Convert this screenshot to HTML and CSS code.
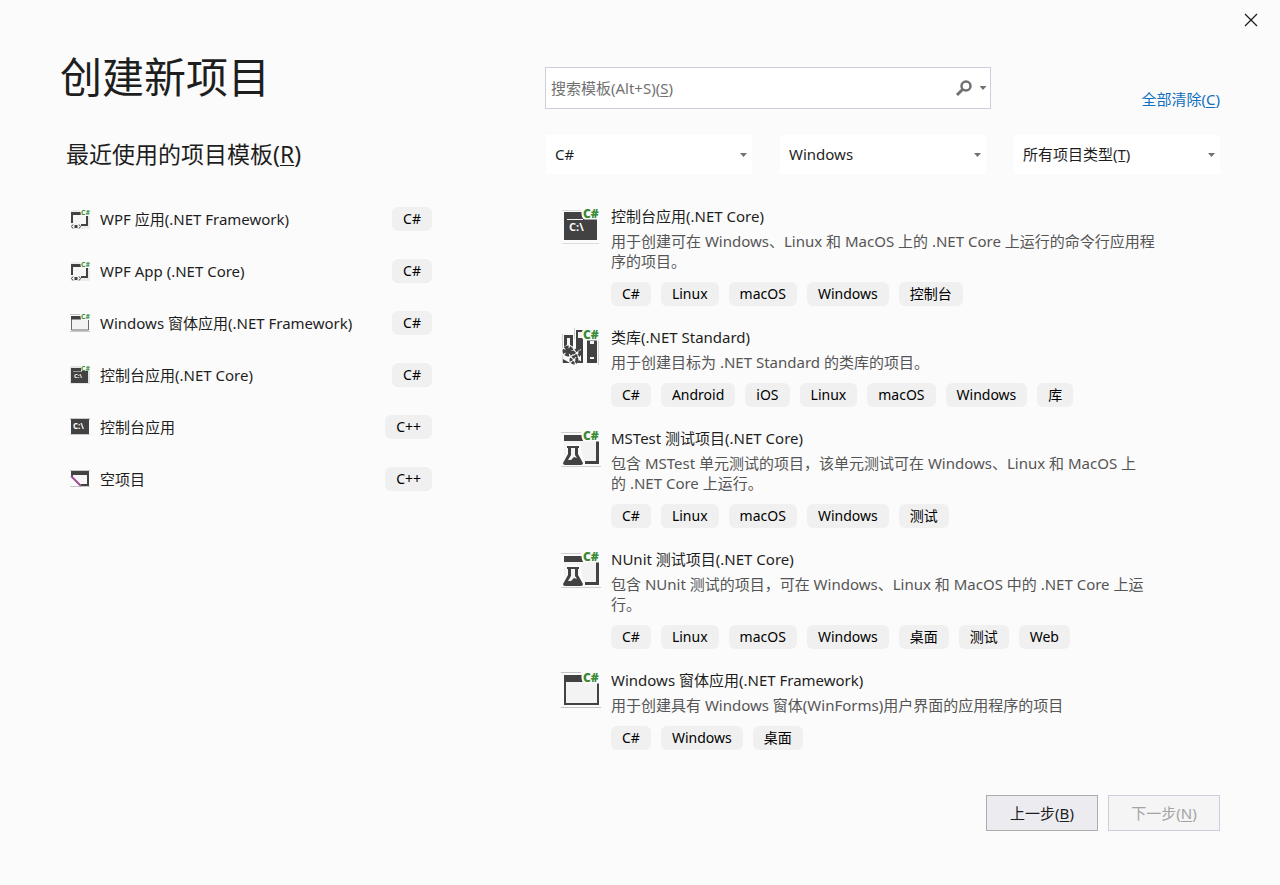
FILE: index.html
```html
<!DOCTYPE html>
<html lang="zh-CN">
<head>
<meta charset="utf-8">
<title>创建新项目</title>
<link rel="stylesheet" href="styles.css">
</head>
<body>
<svg class="defs" aria-hidden="true">
  <symbol id="s-wpf" viewBox="0 0 20 20">
    <path d="M1 1H20V20H1Z" fill="#ececec"/>
    <path d="M2 3H18V17H2Z" fill="#f6f6f6"/>
    <path d="M1 3H12V6H3V14H1ZM16 7H18V17H11V15H16Z" fill="#424242"/>
    <path d="M3 15.500L1.500 17.500L3 19.500M9 15.500L10.500 17.500L9 19.500" fill="none" stroke="#424242"/>
    <path d="M4.500 16H7.500V19H4.500Z" fill="#424242"/>
    <path d="M10 0H20V7H11Z" fill="#fbfbfb"/>
  </symbol>
  <symbol id="s-form" viewBox="0 0 20 20">
    <path d="M0 1H20V2H0ZM0 18H20V19H0Z" fill="#c8c8c8"/>
    <path d="M1.500 4H18.500V17H1.500Z" fill="#f3f3f3" stroke="#686868"/>
    <path d="M1 3H12V6.500H1Z" fill="#424242"/>
    <path d="M10 0H20V7H11Z" fill="#fbfbfb"/>
  </symbol>
  <symbol id="s-console" viewBox="0 0 20 20">
    <path d="M0 1H20V19H0Z" fill="#e4e4e4"/>
    <path d="M1 3H18V18H1Z" fill="#424242"/>
    <path d="M3 6.500H12" stroke="#999"/>
    <path d="M11 0H20V6H11Z" fill="#fbfbfb"/>
  </symbol>
  <symbol id="s-cpp" viewBox="0 0 20 20">
    <path d="M0 1H20V3H0ZM0 17H20V18H0Z" fill="#c8c8c8"/>
    <path d="M1 2H19V17H1Z" fill="#424242"/>
  </symbol>
  <symbol id="s-empty" viewBox="0 0 20 20">
    <path d="M0 1H20V2H0ZM0 17H20V18H0Z" fill="#c8c8c8"/>
    <path d="M1 2H19V17H11V15H17V6H3V8H1Z" fill="#424242"/>
    <path d="M3 6H17V15H11L3 8Z" fill="#f6f6f6"/>
    <path d="M1 7L11 17" stroke="#9b4f96" stroke-width="2"/>
  </symbol>
  <symbol id="halo" viewBox="0 0 40 40">
    <path d="M23 2Q20 4 20.500 8Q21 13 24 13.500H40V1H25Z" fill="#fbfbfb"/>
  </symbol>
  <symbol id="l-console" viewBox="0 0 40 40">
    <path d="M1 4H20V5H1ZM1 37H38V38H1Z" fill="#dcdcdc"/>
    <path d="M3 6H36V34H3Z" fill="#424242"/>
    <path d="M6 13.500H22" stroke="#f0f0f0"/>
    <use href="#halo"/>
  </symbol>
  <symbol id="l-library" viewBox="0 0 40 40">
    <path d="M37.500 12V38M13.500 1V12M1.500 7V36" stroke="#cfcfcf"/>
    <path d="M4.500 9.500H10.500V24H4.500Z" fill="#f3f3f3" stroke="#424242" stroke-width="3"/>
    <path d="M15 3H22V36H15Z" fill="#424242"/>
    <path d="M17 5H22V11H17Z" fill="#f3f3f3"/>
    <path d="M26 11H36V36H26Z" fill="#424242"/>
    <path d="M29 14H33V17H29ZM29 30H33V32H29Z" fill="#f3f3f3"/>
    <path d="M0 22L7 17L13 20L15 25L20 22V38H2V30Z" fill="#fbfbfb"/>
    <path d="M2 32L9 36H2ZM18 33L22 36H16Z" fill="#424242"/>
    <circle cx="7" cy="24" r="4" fill="none" stroke="#424242" stroke-width="3" stroke-dasharray="4 1"/>
    <circle cx="7" cy="24" r="3" fill="#424242"/>
    <circle cx="16" cy="26" r="3" fill="none" stroke="#424242" stroke-width="3" stroke-dasharray="3 1"/>
    <circle cx="13" cy="33" r="3" fill="none" stroke="#424242" stroke-width="3" stroke-dasharray="3 1"/>
    <use href="#halo"/>
  </symbol>
  <symbol id="l-test" viewBox="0 0 40 40">
    <path d="M0 4H20V5H0ZM0 38H40V39H0Z" fill="#cfcfcf"/>
    <path d="M3 12H36V34H3Z" fill="#f3f3f3"/>
    <path d="M3 7H22V13H3ZM35 13H38V36H24V33H35Z" fill="#424242"/>
    <path d="M5 16H20V21L24 38H0L5 25Z" fill="#fbfbfb"/>
    <path d="M6 18H18V20H17V26L22 35Q22 37 20 37H4Q2 37 2 35L7 26V20H6Z" fill="#424242"/>
    <path d="M10 20H14V27L16 30L13 29L10 32H7L10 27Z" fill="#f3f3f3"/>
    <use href="#halo"/>
  </symbol>
  <symbol id="l-form" viewBox="0 0 40 40">
    <path d="M0 2H20V3H0ZM0 37H40V38H0Z" fill="#c4c4c4"/>
    <path d="M3 5H38V35H3Z" fill="#424242"/>
    <path d="M5 12H36V33H5Z" fill="#f3f3f3"/>
    <use href="#halo"/>
  </symbol>
</svg>

<div class="window">
  <header class="titlebar">
    <button class="close" type="button" aria-label="关闭">
      <svg width="14" height="14" viewBox="0 0 14 14"><path d="M1 1L13 13M13 1L1 13" fill="none" stroke="#1e1e1e" stroke-width="1.300"/></svg>
    </button>
  </header>

  <main class="content">
    <section class="recent">
      <h1 class="page-title">创建新项目</h1>
      <h2 class="recent-title">最近使用的项目模板(<u>R</u>)</h2>
      <ul class="recent-list">
        <li class="recent-item"><svg class="icon-small" viewBox="0 0 20 20"><use href="#s-wpf"/><text class="cs-small" x="11" y="6">C#</text></svg><span class="recent-name">WPF 应用(.NET Framework)</span><span class="tag">C#</span></li>
        <li class="recent-item"><svg class="icon-small" viewBox="0 0 20 20"><use href="#s-wpf"/><text class="cs-small" x="11" y="6">C#</text></svg><span class="recent-name">WPF App (.NET Core)</span><span class="tag">C#</span></li>
        <li class="recent-item"><svg class="icon-small" viewBox="0 0 20 20"><use href="#s-form"/><text class="cs-small" x="11" y="6">C#</text></svg><span class="recent-name">Windows 窗体应用(.NET Framework)</span><span class="tag">C#</span></li>
        <li class="recent-item"><svg class="icon-small" viewBox="0 0 20 20"><use href="#s-console"/><text class="cs-small" x="11" y="6">C#</text><text class="prompt-small" x="4" y="13">C:\</text></svg><span class="recent-name">控制台应用(.NET Core)</span><span class="tag">C#</span></li>
        <li class="recent-item"><svg class="icon-small" viewBox="0 0 20 20"><use href="#s-cpp"/><text class="prompt-cpp" x="3" y="12">C:\</text></svg><span class="recent-name">控制台应用</span><span class="tag">C++</span></li>
        <li class="recent-item"><svg class="icon-small" viewBox="0 0 20 20"><use href="#s-empty"/></svg><span class="recent-name">空项目</span><span class="tag">C++</span></li>
      </ul>
    </section>

    <section class="browse">
      <div class="search-row">
        <div class="search">
          <input class="search-input" id="search" type="text" placeholder=" " accesskey="s">
          <label class="search-label" for="search">搜索模板(Alt+S)(<u>S</u>)</label>
          <button class="search-button" type="button" aria-label="搜索">
            <svg width="18" height="18" viewBox="0 0 18 18"><circle cx="11" cy="7" r="4.500" fill="none" stroke="#717171" stroke-width="2.500"/><path d="M8 10L2 16" stroke="#717171" stroke-width="3"/></svg>
          </button>
          <button class="search-more" type="button" aria-label="搜索选项"><span class="arrow"></span></button>
        </div>
        <a class="clear-link" href="#">全部清除(<u>C</u>)</a>
      </div>

      <div class="filters">
        <div class="filter"><select class="filter-select" aria-label="语言"><option>C#</option></select><span class="arrow"></span></div>
        <div class="filter"><select class="filter-select" aria-label="平台"><option>Windows</option></select><span class="arrow"></span></div>
        <div class="filter"><select class="filter-select" aria-label="项目类型"><option>所有项目类型(T&#818;)</option></select><span class="arrow"></span></div>
      </div>

      <ul class="templates">
        <li class="template">
          <svg class="icon-large" viewBox="0 0 40 40"><use href="#l-console"/><text class="cs-large" x="22" y="12">C#</text><text class="prompt-large" x="8" y="25">C:\</text></svg>
          <div class="template-body">
            <h3 class="template-name">控制台应用(.NET Core)</h3>
            <p class="template-desc">用于创建可在 Windows、Linux 和 MacOS 上的 .NET Core 上运行的命令行应用程<br>序的项目。</p>
            <div class="tags"><span class="tag">C#</span><span class="tag">Linux</span><span class="tag">macOS</span><span class="tag">Windows</span><span class="tag">控制台</span></div>
          </div>
        </li>
        <li class="template">
          <svg class="icon-large" viewBox="0 0 40 40"><use href="#l-library"/><text class="cs-large" x="22" y="12">C#</text></svg>
          <div class="template-body">
            <h3 class="template-name">类库(.NET Standard)</h3>
            <p class="template-desc">用于创建目标为 .NET Standard 的类库的项目。</p>
            <div class="tags"><span class="tag">C#</span><span class="tag">Android</span><span class="tag">iOS</span><span class="tag">Linux</span><span class="tag">macOS</span><span class="tag">Windows</span><span class="tag">库</span></div>
          </div>
        </li>
        <li class="template">
          <svg class="icon-large" viewBox="0 0 40 40"><use href="#l-test"/><text class="cs-large" x="22" y="12">C#</text></svg>
          <div class="template-body">
            <h3 class="template-name">MSTest 测试项目(.NET Core)</h3>
            <p class="template-desc">包含 MSTest 单元测试的项目，该单元测试可在 Windows、Linux 和 MacOS 上<br>的 .NET Core 上运行。</p>
            <div class="tags"><span class="tag">C#</span><span class="tag">Linux</span><span class="tag">macOS</span><span class="tag">Windows</span><span class="tag">测试</span></div>
          </div>
        </li>
        <li class="template">
          <svg class="icon-large" viewBox="0 0 40 40"><use href="#l-test"/><text class="cs-large" x="22" y="12">C#</text></svg>
          <div class="template-body">
            <h3 class="template-name">NUnit 测试项目(.NET Core)</h3>
            <p class="template-desc">包含 NUnit 测试的项目，可在 Windows、Linux 和 MacOS 中的 .NET Core 上运<br>行。</p>
            <div class="tags"><span class="tag">C#</span><span class="tag">Linux</span><span class="tag">macOS</span><span class="tag">Windows</span><span class="tag">桌面</span><span class="tag">测试</span><span class="tag">Web</span></div>
          </div>
        </li>
        <li class="template">
          <svg class="icon-large" viewBox="0 0 40 40"><use href="#l-form"/><text class="cs-large" x="22" y="12">C#</text></svg>
          <div class="template-body">
            <h3 class="template-name">Windows 窗体应用(.NET Framework)</h3>
            <p class="template-desc">用于创建具有 Windows 窗体(WinForms)用户界面的应用程序的项目</p>
            <div class="tags"><span class="tag">C#</span><span class="tag">Windows</span><span class="tag">桌面</span></div>
          </div>
        </li>
      </ul>
    </section>
  </main>

  <footer class="actions">
    <button class="action" type="button">上一步(<u>B</u>)</button>
    <button class="action" type="button" disabled>下一步(<u>N</u>)</button>
  </footer>
</div>
</body>
</html>
```

FILE: styles.css
```css
* {
  box-sizing: border-box;
}

body {
  margin: 0;
  background: #fbfbfb;
  color: #1e1e1e;
  font: 15px/20px "Noto Sans", "Noto Sans CJK SC", sans-serif;
}

h1, h2, h3, p, ul {
  margin: 0;
  padding: 0;
  font-weight: 400;
}

ul {
  list-style: none;
}

button, input, select {
  font: inherit;
  color: inherit;
}

u {
  text-underline-offset: 2px;
  text-decoration-thickness: 1px;
}

.defs {
  display: none;
}

.window {
  display: flex;
  flex-direction: column;
  min-height: 100vh;
  padding-bottom: 54px;
}

.titlebar {
  display: flex;
  justify-content: flex-end;
  padding: 8px 16px 0 0;
}

.close {
  display: flex;
  align-items: center;
  justify-content: center;
  width: 26px;
  height: 24px;
  padding: 0;
  border: 0;
  background: none;
}

.content {
  display: grid;
  grid-template-columns: 372px minmax(0, 1fr);
  column-gap: 113px;
  flex: 1;
  padding: 0 60px;
}

/* Recent templates */

.page-title {
  padding-top: 15px;
  font-size: 42px;
  line-height: 60px;
}

.recent-title {
  margin: 31px 0 0 6px;
  font-size: 23px;
  line-height: 32px;
}

.recent-list {
  margin-top: 23px;
}

.recent-item {
  display: flex;
  align-items: center;
  height: 52px;
  padding-left: 10px;
}

.icon-small {
  flex: none;
  width: 20px;
  height: 20px;
  margin-right: 10px;
  overflow: visible;
}

.recent-name {
  flex: 1;
  white-space: nowrap;
}

.tag {
  height: 24px;
  padding: 0 11px;
  border-radius: 6px;
  background: #f0f0f0;
  color: #000;
  font-size: 14px;
  line-height: 24px;
  white-space: nowrap;
}

/* Search and filters */

.search-row {
  display: flex;
  justify-content: space-between;
  padding-top: 35px;
}

.search {
  position: relative;
  display: flex;
  width: 446px;
  height: 42px;
  border: 1px solid #cccedb;
  background: #fff;
}

.search-input {
  flex: 1;
  min-width: 0;
  padding: 0 5px;
  border: 0;
  outline: 0;
  background: none;
}

.search-label {
  position: absolute;
  top: 10px;
  left: 5px;
  color: #717171;
  pointer-events: none;
}

.search-input:not(:placeholder-shown) + .search-label {
  display: none;
}

.search-button,
.search-more {
  display: flex;
  align-items: center;
  justify-content: center;
  padding: 0;
  border: 0;
  background: none;
}

.search-button {
  width: 24px;
}

.search-more {
  width: 14px;
}

.arrow {
  width: 7px;
  height: 4px;
  background: #717171;
  clip-path: polygon(0 0, 100% 0, 50% 100%);
}

.clear-link {
  margin-top: 22px;
  color: #0e70c0;
  text-decoration: none;
}

.filters {
  display: grid;
  grid-template-columns: repeat(3, 1fr);
  gap: 28px;
  margin: 26px 0 0 1px;
}

.filter {
  position: relative;
  height: 39px;
}

.filter-select {
  display: block;
  width: 100%;
  height: 100%;
  padding: 0 20px 2px 9px;
  border: 0;
  appearance: none;
  background: #fff;
}

.filter .arrow {
  position: absolute;
  top: 18px;
  right: 5px;
  pointer-events: none;
}

/* Template results */

.templates {
  display: grid;
  gap: 19px;
  margin-top: 30px;
  padding-left: 16px;
}

.template {
  display: flex;
  gap: 10px;
}

.icon-large {
  flex: none;
  width: 40px;
  height: 40px;
  margin-top: 2px;
  overflow: visible;
}

.template-body {
  flex: 1;
  min-width: 0;
}

.template-name {
  font-size: 15px;
  line-height: 24px;
}

.template-desc {
  margin: 3px 0 11px;
  color: #555;
}

.tags {
  display: flex;
  gap: 10px;
}

/* Footer */

.actions {
  display: flex;
  justify-content: flex-end;
  gap: 10px;
  padding: 0 60px;
}

.action {
  width: 112px;
  height: 36px;
  padding: 0;
  border: 1px solid #acacac;
  background: #ececf0;
}

.action:disabled {
  border-color: #cccedb;
  background: #f5f5f5;
  color: #a2a4a5;
}

/* Lettering inside icons */

.cs-small {
  fill: #388a34;
  font: 700 7px "Open Sans", sans-serif;
}

.cs-large {
  fill: #388a34;
  font: 800 12px "Open Sans", sans-serif;
}

.prompt-small {
  fill: #fff;
  font: 700 6px "Open Sans", sans-serif;
}

.prompt-cpp {
  fill: #fff;
  font: 700 8px "Open Sans", sans-serif;
}

.prompt-large {
  fill: #fff;
  font: 700 11px "Open Sans", sans-serif;
}
```
